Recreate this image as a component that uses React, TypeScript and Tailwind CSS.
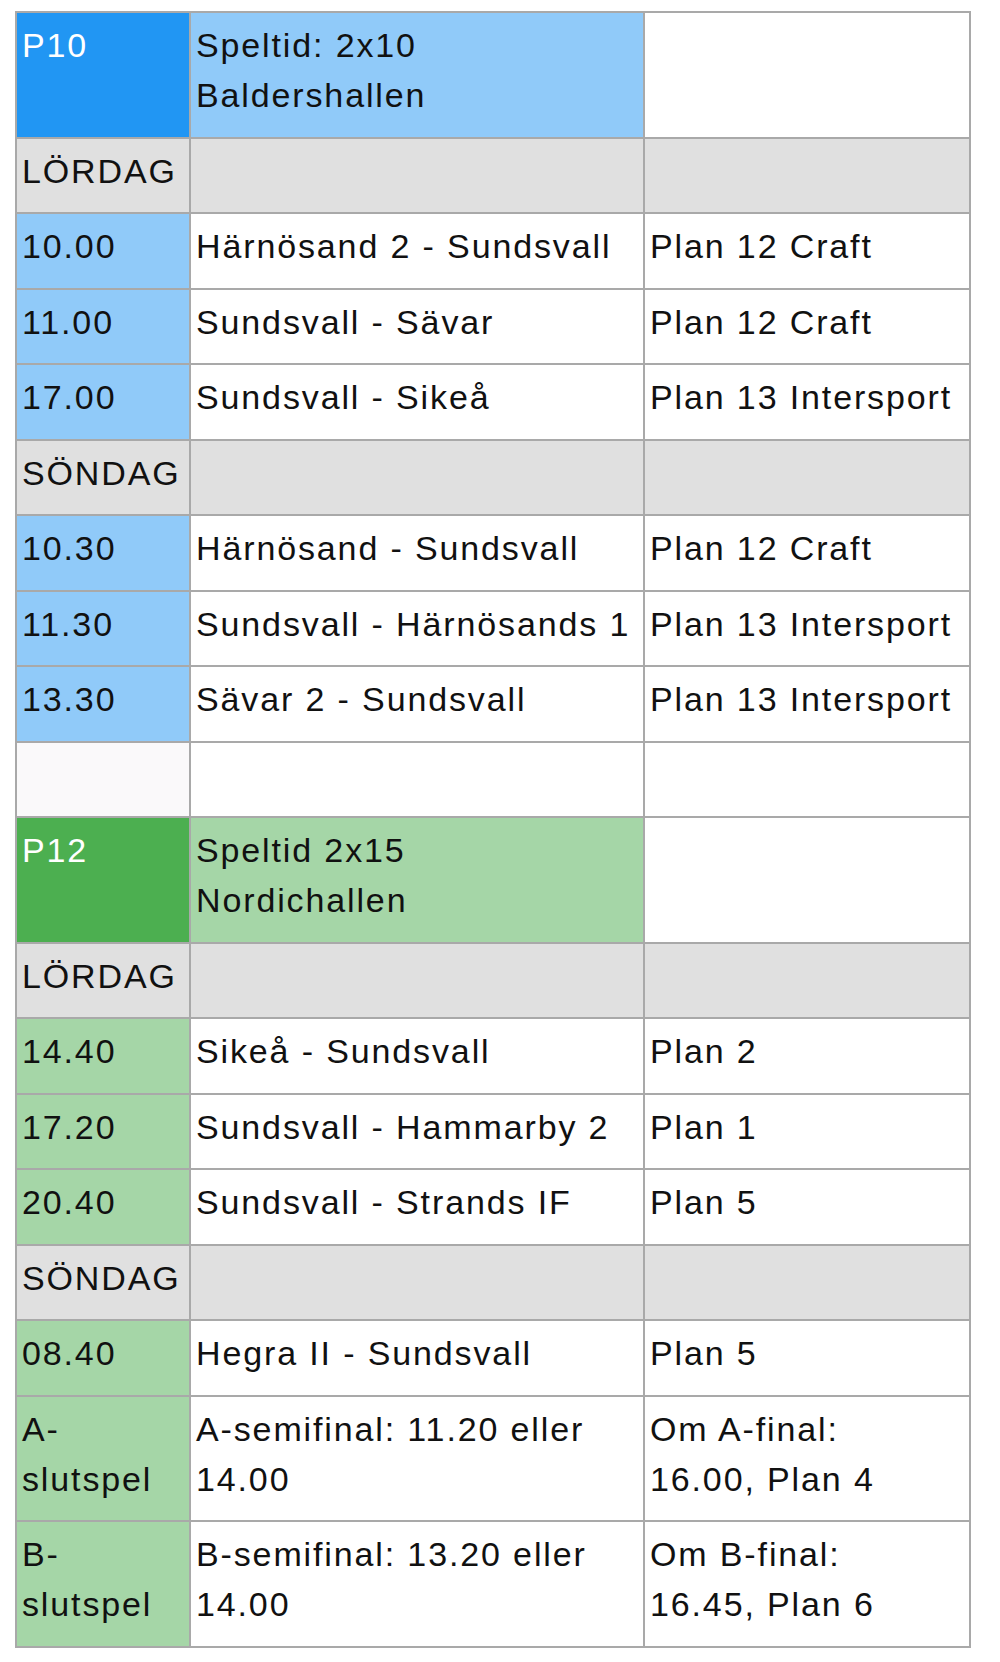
type Rad = {
  a: string[];
  b: string[];
  c: string[];
  farg: "head" | "dag" | "tid" | "tom";
};

type Grupp = {
  mork: string;
  ljus: string;
  rader: Rad[];
};

const grupper: Grupp[] = [
  {
    mork: "bg-[#2196f3]",
    ljus: "bg-[#90caf9]",
    rader: [
      { a: ["P10"], b: ["Speltid: 2x10", "Baldershallen"], c: [], farg: "head" },
      { a: ["LÖRDAG"], b: [], c: [], farg: "dag" },
      { a: ["10.00"], b: ["Härnösand 2 - Sundsvall"], c: ["Plan 12 Craft"], farg: "tid" },
      { a: ["11.00"], b: ["Sundsvall - Sävar"], c: ["Plan 12 Craft"], farg: "tid" },
      { a: ["17.00"], b: ["Sundsvall - Sikeå"], c: ["Plan 13 Intersport"], farg: "tid" },
      { a: ["SÖNDAG"], b: [], c: [], farg: "dag" },
      { a: ["10.30"], b: ["Härnösand - Sundsvall"], c: ["Plan 12 Craft"], farg: "tid" },
      { a: ["11.30"], b: ["Sundsvall - Härnösands 1"], c: ["Plan 13 Intersport"], farg: "tid" },
      { a: ["13.30"], b: ["Sävar 2 - Sundsvall"], c: ["Plan 13 Intersport"], farg: "tid" },
      { a: [], b: [], c: [], farg: "tom" },
    ],
  },
  {
    mork: "bg-[#4caf50]",
    ljus: "bg-[#a5d6a7]",
    rader: [
      { a: ["P12"], b: ["Speltid 2x15", "Nordichallen"], c: [], farg: "head" },
      { a: ["LÖRDAG"], b: [], c: [], farg: "dag" },
      { a: ["14.40"], b: ["Sikeå - Sundsvall"], c: ["Plan 2"], farg: "tid" },
      { a: ["17.20"], b: ["Sundsvall - Hammarby 2"], c: ["Plan 1"], farg: "tid" },
      { a: ["20.40"], b: ["Sundsvall - Strands IF"], c: ["Plan 5"], farg: "tid" },
      { a: ["SÖNDAG"], b: [], c: [], farg: "dag" },
      { a: ["08.40"], b: ["Hegra II - Sundsvall"], c: ["Plan 5"], farg: "tid" },
      { a: ["A-", "slutspel"], b: ["A-semifinal: 11.20 eller", "14.00"], c: ["Om A-final:", "16.00, Plan 4"], farg: "tid" },
      { a: ["B-", "slutspel"], b: ["B-semifinal: 13.20 eller", "14.00"], c: ["Om B-final:", "16.45, Plan 6"], farg: "tid" },
    ],
  },
];

function Cell({ rader, klass }: { rader: string[]; klass: string }) {
  return (
    <td
      className={`border-2 border-[#a9a9a9] px-[5px] pt-[7px] pb-[16.5px] align-top leading-[50px] ${klass}`}
    >
      {rader.length === 0 ? <span>&nbsp;</span> : rader.map((t, i) => <div key={i}>{t}</div>)}
    </td>
  );
}

export default function App() {
  return (
    <div className="min-h-screen bg-white pl-[15px] pt-[11px]">
      <table
        className="w-[954px] table-fixed border-collapse text-[34px] tracking-[0.055em] text-[#111]"
        style={{ fontFamily: '"Liberation Sans", Arial, sans-serif' }}
      >
        <colgroup>
          <col className="w-[174px]" />
          <col className="w-[454px]" />
          <col className="w-[326px]" />
        </colgroup>
        <tbody>
          {grupper.map((g, gi) =>
            g.rader.map((r, ri) => {
              let a = "";
              let b = "bg-white";
              let c = "bg-white";
              if (r.farg === "head") {
                a = `${g.mork} text-white`;
                b = g.ljus;
              } else if (r.farg === "dag") {
                a = "bg-[#e0e0e0]";
                b = "bg-[#e0e0e0]";
                c = "bg-[#e0e0e0]";
              } else if (r.farg === "tid") {
                a = g.ljus;
              } else {
                a = "bg-[#faf9fa]";
              }
              return (
                <tr key={`${gi}-${ri}`}>
                  <Cell rader={r.a} klass={a} />
                  <Cell rader={r.b} klass={b} />
                  <Cell rader={r.c} klass={c} />
                </tr>
              );
            })
          )}
        </tbody>
      </table>
    </div>
  );
}
